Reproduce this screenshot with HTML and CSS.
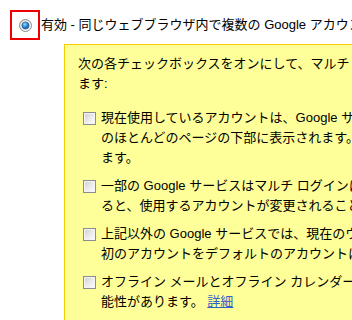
FILE: index.html
```html
<!DOCTYPE html>
<html lang="ja">
<head>
<meta charset="utf-8">
<link rel="stylesheet" href="styles.css">
</head>
<body>
<div class="header">
  <span class="radio-frame">
    <svg class="radio" width="13" height="13" viewBox="0 0 13 13">
      <defs>
        <linearGradient id="ring" x1="0" y1="0" x2="1" y2="1">
          <stop offset="0" stop-color="#d8d8d8"/>
          <stop offset="1" stop-color="#ffffff"/>
        </linearGradient>
        <radialGradient id="dot" cx="0.4" cy="0.35" r="0.7">
          <stop offset="0" stop-color="#9fdcff"/>
          <stop offset="0.5" stop-color="#2a8ad8"/>
          <stop offset="1" stop-color="#0b4f96"/>
        </radialGradient>
      </defs>
      <circle cx="6.5" cy="6.5" r="6" fill="url(#ring)" stroke="#8c8c8c" stroke-width="1"/>
      <circle cx="6.5" cy="6.5" r="3.6" fill="url(#dot)" stroke="#2b5f8e" stroke-width="0.6"/>
    </svg>
  </span>
  <span class="label">有効 - 同じウェブブラウザ内で複数の Google アカウントを切り替えて使用します</span>
</div>
<div class="notice">
  <p class="intro">次の各チェックボックスをオンにして、マルチ ログインの仕組みを理解していることを確認し<br>ます:</p>
  <ul class="checks">
    <li class="check-item"><span class="checkbox"></span><span class="check-text">現在使用しているアカウントは、Google サービスのページの右上に表示されます。また、Google サービス<br>のほとんどのページの下部に表示されます。アカウントを切り替える場合は、ここから操作でき<br>ます。</span></li>
    <li class="check-item"><span class="checkbox"></span><span class="check-text">一部の Google サービスはマルチ ログインに対応していません。対応していないサービスにアクセスす<br>ると、使用するアカウントが変更されることがあります。</span></li>
    <li class="check-item"><span class="checkbox"></span><span class="check-text">上記以外の Google サービスでは、現在のウェブブラウザでログインした最<br>初のアカウントをデフォルトのアカウントにします。</span></li>
    <li class="check-item"><span class="checkbox"></span><span class="check-text">オフライン メールとオフライン カレンダーは、マルチ ログインでは無効になる可<br>能性があります。 <a class="more" href="#">詳細</a></span></li>
  </ul>
</div>
</body>
</html>
```
FILE: styles.css
```css
html, body {
  margin: 0;
  padding: 0;
  background: #ffffff;
  overflow: hidden;
}
body {
  width: 352px;
  height: 320px;
  font-family: "Liberation Sans", "Noto Sans CJK JP", sans-serif;
  font-size: 13px;
  line-height: 20px;
  color: #000000;
}
.header {
  display: flex;
  align-items: center;
  padding: 10px 0 0 10px;
  white-space: nowrap;
}
.radio-frame {
  width: 26px;
  height: 26px;
  border: 2px solid #ee0000;
  display: flex;
  align-items: center;
  justify-content: center;
  flex: none;
}
.radio {
  display: block;
  margin-left: 1px;
  margin-top: 1px;
}
.label {
  margin-left: 1px;
  margin-top: -1px;
}
.notice {
  margin: 4px 0 0 64px;
  width: 700px;
  height: 400px;
  background: #ffff99;
  border: 1px solid #f5cc00;
  padding: 9px 13px;
  box-sizing: border-box;
  white-space: nowrap;
}
.intro {
  margin: 0 0 14px 0;
}
.checks {
  list-style: none;
  margin: 0;
  padding: 0;
}
.check-item {
  display: flex;
  align-items: flex-start;
  margin-bottom: 8px;
}
.checkbox {
  flex: none;
  width: 11px;
  height: 11px;
  margin: 4px 5px 0 5px;
  border: 1px solid #8d8d8d;
  background: linear-gradient(135deg, #cfcfcf 0%, #ececec 55%, #ffffff 100%);
  box-shadow: inset 0 0 0 1px #f4f4f4;
}
.more {
  color: #2f62c7;
  text-decoration: underline;
}
```
